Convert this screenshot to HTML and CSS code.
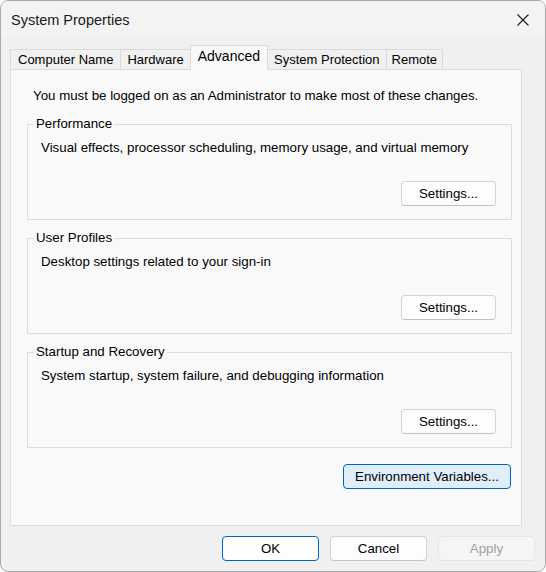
FILE: index.html
```html
<!DOCTYPE html>
<html>
<head>
<meta charset="utf-8">
<link rel="stylesheet" href="styles.css">
</head>
<body>
<div class="window">
  <div class="titlebar">
    <span class="title">System Properties</span>
    <svg class="close" width="12" height="12" viewBox="0 0 12 12"><path d="M0.5 0.5 L11.5 11.5 M11.5 0.5 L0.5 11.5" stroke="#1b1b1b" stroke-width="1.1" fill="none"/></svg>
  </div>
  <div class="body">
    <div class="tabs">
      <div class="tab">Computer Name</div>
      <div class="tab">Hardware</div>
      <div class="tab selected">Advanced</div>
      <div class="tab">System Protection</div>
      <div class="tab">Remote</div>
    </div>
    <div class="panel">
      <p class="intro">You must be logged on as an Administrator to make most of these changes.</p>
      <fieldset class="group">
        <legend>Performance</legend>
        <p class="desc">Visual effects, processor scheduling, memory usage, and virtual memory</p>
        <div class="row"><button class="btn settings">Settings...</button></div>
      </fieldset>
      <fieldset class="group">
        <legend>User Profiles</legend>
        <p class="desc">Desktop settings related to your sign-in</p>
        <div class="row"><button class="btn settings">Settings...</button></div>
      </fieldset>
      <fieldset class="group">
        <legend>Startup and Recovery</legend>
        <p class="desc">System startup, system failure, and debugging information</p>
        <div class="row"><button class="btn settings">Settings...</button></div>
      </fieldset>
      <div class="row env-row"><button class="btn env">Environment Variables...</button></div>
    </div>
    <div class="footer">
      <button class="btn dlg default">OK</button>
      <button class="btn dlg">Cancel</button>
      <button class="btn dlg disabled">Apply</button>
    </div>
  </div>
</div>
</body>
</html>
```
FILE: styles.css
```css
html, body {
  margin: 0;
  padding: 0;
  background: #ffffff;
}
body {
  font-family: "Liberation Sans", Arial, sans-serif;
  font-size: 13.3px;
  color: #000;
}
.window {
  width: 546px;
  height: 572px;
  box-sizing: border-box;
  border: 1px solid #a9a9a9;
  border-radius: 8px;
  background: #f0f0f0;
  display: flex;
  flex-direction: column;
  overflow: hidden;
}
.titlebar {
  height: 37px;
  flex: none;
  display: flex;
  align-items: center;
  justify-content: space-between;
  padding: 0 16px 0 10px;
  background: #f3f3f3;
}
.title {
  font-size: 14.5px;
  color: #1a1a1a;
}
.close {
  display: block;
}
.body {
  padding: 0 10px 0 9px;
  display: flex;
  flex-direction: column;
}
.tabs {
  display: flex;
  align-items: flex-end;
  margin-top: 7px;
  margin-bottom: -1px;
  position: relative;
  z-index: 1;
}
.tab {
  height: 21px;
  box-sizing: border-box;
  border: 1px solid #d9d9d9;
  border-bottom-color: #dcdcdc;
  background: #f0f0f0;
  padding: 0 6px;
  font-size: 13px;
  line-height: 20px;
  white-space: nowrap;
  margin-left: -1px;
}
.tab:first-child {
  margin-left: 0;
  padding: 0 7px;
}
.tab:last-child {
  padding: 0 5px;
}
.tab.selected {
  height: 25px;
  padding: 0 7px;
  background: #f9f9f9;
  border-bottom-color: #f9f9f9;
  line-height: 21px;
  position: relative;
  z-index: 2;
  font-size: 14px;
}
.panel {
  width: 512px;
  height: 457px;
  box-sizing: border-box;
  border: 1px solid #dcdcdc;
  background: #f9f9f9;
  padding: 0 9px 0 16px;
  display: flex;
  flex-direction: column;
}
.intro {
  margin: 18px 0 12px 6px;
  line-height: 16px;
}
.group {
  margin: 0 0 10px 0;
  padding: 0 15px 13px 13px;
  border: 1px solid #dcdcdc;
  min-width: 0;
}
.group legend {
  padding: 0 2px;
  margin-left: -7px;
  line-height: 16px;
}
.desc {
  margin: 8px 0 0 0;
  line-height: 16px;
}
.row {
  display: flex;
  justify-content: flex-end;
}
.btn {
  font-family: "Liberation Sans", Arial, sans-serif;
  font-size: 13.3px;
  color: #000;
  height: 25px;
  box-sizing: border-box;
  border: 1px solid #d3d3d3;
  border-bottom-color: #c2c2c2;
  border-radius: 4px;
  background: #fdfdfd;
  padding: 0;
  margin: 0;
  flex: none;
}
.settings {
  width: 95px;
  margin-top: 25px;
}
.env-row {
  margin-top: 6px;
  padding-right: 1px;
}
.env {
  width: 168px;
  background: #e0eef9;
  border: 1px solid #0067c0;
}
.footer {
  display: flex;
  justify-content: flex-end;
  gap: 11px;
  margin-top: 10px;
}
.dlg {
  width: 97px;
}
.default {
  border: 1px solid #0067c0;
  background: #fdfdfd;
}
.disabled {
  background: #f5f5f5;
  border: 1px solid #e5e5e5;
  color: #a0a0a0;
}
```
